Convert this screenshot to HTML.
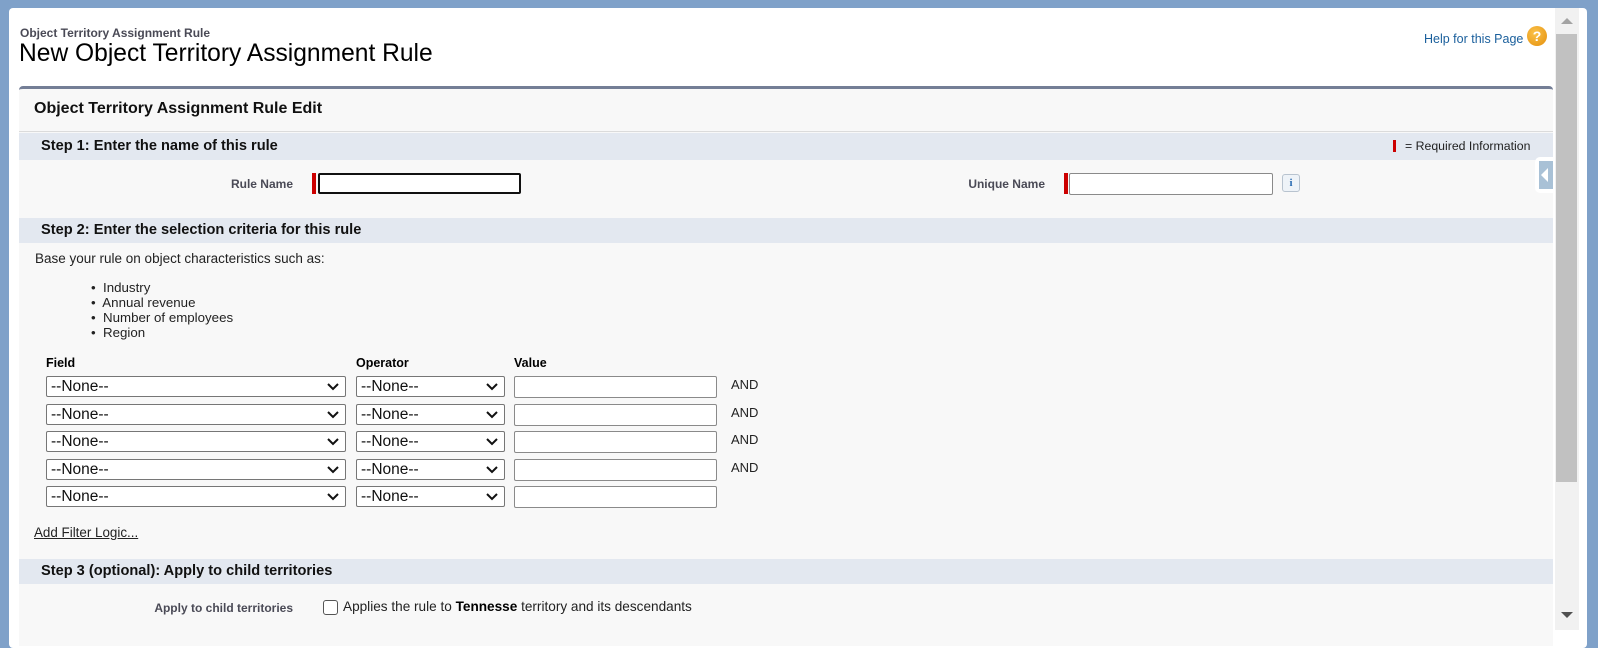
<!DOCTYPE html>
<html><head><meta charset="utf-8"><style>
*{box-sizing:border-box}
body{margin:0;width:1598px;height:630px;overflow:hidden;background:#7fa1c9;font-family:"Liberation Sans",Arial,sans-serif;color:#000;position:relative}
.a{position:absolute}
.card{left:9px;top:8px;width:1578px;height:640px;background:#fff;border-radius:4px}
.bar{position:absolute;left:19px;width:1534px;background:#e3e8f0;font-weight:bold;font-size:14.6px;color:#111;padding-left:22px}
.sel{position:absolute;height:21px;border:1px solid #767676;border-radius:2px;background:#fff;font-size:15.5px;padding-left:4px;line-height:19px;color:#111}
.sel svg{position:absolute;right:6px;top:6px}
.inp{position:absolute;height:22px;border:1px solid #8a8a8a;border-radius:2px;background:#fff}
.and{position:absolute;left:731px;font-size:13px;color:#222}
.lbl{position:absolute;font-size:12px;font-weight:bold;color:#4a4a56;text-align:right}
</style></head><body>
<div class="a card"></div>
<div class="a" style="left:20px;top:26px;font-size:12px;font-weight:bold;color:#4a4a56">Object Territory Assignment Rule</div>
<div class="a" style="left:19px;top:40px;font-size:24.6px;color:#000">New Object Territory Assignment Rule</div>
<div class="a" style="left:1424px;top:32px;font-size:12.5px;color:#1a5f9c">Help for this Page</div>
<div class="a" style="left:1527px;top:26px;width:20px;height:20px;border-radius:50%;background:radial-gradient(circle at 40% 35%,#fbc24a,#e48f0c);color:#fff;font-weight:bold;font-size:14px;text-align:center;line-height:20px">?</div>
<div class="a" style="left:1555px;top:8px;width:24px;height:622px;background:#f1f1f1"></div>
<div class="a" style="left:1556px;top:34px;width:21px;height:448px;background:#c1c1c1"></div>
<div class="a" style="left:1561px;top:18px;width:0;height:0;border-left:6px solid transparent;border-right:6px solid transparent;border-bottom:6px solid #a3a3a3"></div>
<div class="a" style="left:1561px;top:612px;width:0;height:0;border-left:6px solid transparent;border-right:6px solid transparent;border-top:6px solid #505050"></div>
<div class="a" style="left:19px;top:86px;width:1534px;height:560px;background:#f8f8f8;border-top:3px solid #747e96;border-radius:4px 4px 0 0"></div>
<div class="a" style="left:34px;top:100px;font-size:16px;font-weight:bold;color:#111">Object Territory Assignment Rule Edit</div>
<div class="a" style="left:19px;top:131px;width:1534px;height:1px;background:#dbdbdb"></div>
<div class="bar" style="top:133px;height:27px;line-height:27px">Step 1: Enter the name of this rule</div>
<div class="a" style="left:1393px;top:140px;width:3px;height:12px;background:#c00"></div>
<div class="a" style="left:1405px;top:139px;font-size:12.3px;color:#222">= Required Information</div>
<div class="lbl" style="left:150px;top:177px;width:143px">Rule Name</div>
<div class="a" style="left:312px;top:173px;width:4px;height:21px;background:#c00"></div>
<div class="a" style="left:318px;top:173px;width:203px;height:21px;border:2px solid #111;border-radius:2px;background:#fff"></div>
<div class="lbl" style="left:900px;top:177px;width:145px">Unique Name</div>
<div class="a" style="left:1064px;top:173px;width:4px;height:21px;background:#c00"></div>
<div class="inp" style="left:1069px;top:173px;width:204px"></div>
<div class="a" style="left:1282px;top:174px;width:18px;height:18px;border:1px solid #b8c3cf;border-radius:3px;background:#eef3f8;color:#2b6cb3;font-weight:bold;font-size:11px;text-align:center;line-height:16px;font-family:'Liberation Serif',serif">i</div>
<div class="a" style="left:1535px;top:157px;width:18px;height:36px;background:#fff;border-radius:5px 0 0 5px"></div>
<div class="a" style="left:1539px;top:161px;width:14px;height:28px;background:#a9c1d6"></div>
<div class="a" style="left:1541px;top:168px;width:0;height:0;border-top:7px solid transparent;border-bottom:7px solid transparent;border-right:7px solid #fff"></div>
<div class="bar" style="top:218px;height:25px;line-height:25px">Step 2: Enter the selection criteria for this rule</div>
<div class="a" style="left:35px;top:251px;font-size:13.5px;color:#222">Base your rule on object characteristics such as:</div>
<div class="a" style="left:91px;top:280px;font-size:13.3px;color:#222;line-height:15px">
<div>•&nbsp; Industry</div><div>•&nbsp; Annual revenue</div><div>•&nbsp; Number of employees</div><div>•&nbsp; Region</div></div>
<div class="a" style="left:46px;top:356px;font-size:12.5px;font-weight:bold">Field</div>
<div class="a" style="left:356px;top:356px;font-size:12.5px;font-weight:bold">Operator</div>
<div class="a" style="left:514px;top:356px;font-size:12.5px;font-weight:bold">Value</div>

<div class="sel" style="left:46px;top:376px;width:300px">--None--<svg width="12" height="8"><path d="M1 1l5 5 5-5" stroke="#111" stroke-width="2" fill="none"/></svg></div>
<div class="sel" style="left:356px;top:376px;width:149px">--None--<svg width="12" height="8"><path d="M1 1l5 5 5-5" stroke="#111" stroke-width="2" fill="none"/></svg></div>
<div class="inp" style="left:514px;top:376px;width:203px"></div><div class="and" style="top:377px">AND</div>

<div class="sel" style="left:46px;top:404px;width:300px">--None--<svg width="12" height="8"><path d="M1 1l5 5 5-5" stroke="#111" stroke-width="2" fill="none"/></svg></div>
<div class="sel" style="left:356px;top:404px;width:149px">--None--<svg width="12" height="8"><path d="M1 1l5 5 5-5" stroke="#111" stroke-width="2" fill="none"/></svg></div>
<div class="inp" style="left:514px;top:404px;width:203px"></div><div class="and" style="top:405px">AND</div>

<div class="sel" style="left:46px;top:431px;width:300px">--None--<svg width="12" height="8"><path d="M1 1l5 5 5-5" stroke="#111" stroke-width="2" fill="none"/></svg></div>
<div class="sel" style="left:356px;top:431px;width:149px">--None--<svg width="12" height="8"><path d="M1 1l5 5 5-5" stroke="#111" stroke-width="2" fill="none"/></svg></div>
<div class="inp" style="left:514px;top:431px;width:203px"></div><div class="and" style="top:432px">AND</div>

<div class="sel" style="left:46px;top:459px;width:300px">--None--<svg width="12" height="8"><path d="M1 1l5 5 5-5" stroke="#111" stroke-width="2" fill="none"/></svg></div>
<div class="sel" style="left:356px;top:459px;width:149px">--None--<svg width="12" height="8"><path d="M1 1l5 5 5-5" stroke="#111" stroke-width="2" fill="none"/></svg></div>
<div class="inp" style="left:514px;top:459px;width:203px"></div><div class="and" style="top:460px">AND</div>

<div class="sel" style="left:46px;top:486px;width:300px">--None--<svg width="12" height="8"><path d="M1 1l5 5 5-5" stroke="#111" stroke-width="2" fill="none"/></svg></div>
<div class="sel" style="left:356px;top:486px;width:149px">--None--<svg width="12" height="8"><path d="M1 1l5 5 5-5" stroke="#111" stroke-width="2" fill="none"/></svg></div>
<div class="inp" style="left:514px;top:486px;width:203px"></div>

<div class="a" style="left:34px;top:525px;font-size:13.4px;color:#222;text-decoration:underline">Add Filter Logic...</div>
<div class="bar" style="top:559px;height:25px;line-height:25px">Step 3 (optional): Apply to child territories</div>
<div class="lbl" style="left:120px;top:601px;width:173px">Apply to child territories</div>
<div class="a" style="left:323px;top:600px;width:15px;height:15px;border:1px solid #555;border-radius:3px;background:#fff"></div>
<div class="a" style="left:343px;top:599px;font-size:13.6px;color:#222">Applies the rule to <b style="color:#000">Tennesse</b> territory and its descendants</div>
</body></html>
